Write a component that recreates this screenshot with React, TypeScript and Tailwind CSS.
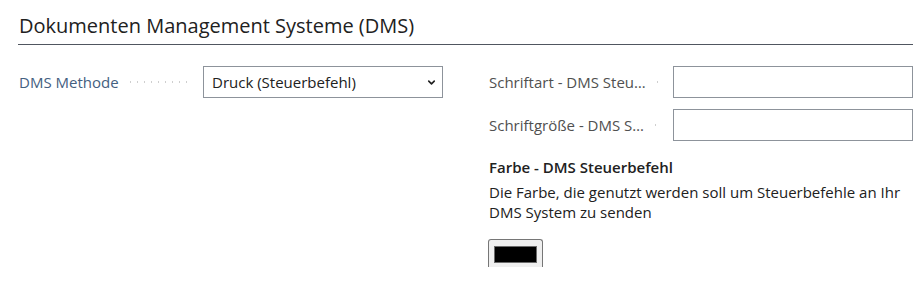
import { ChevronDown } from "lucide-react";

const font = "font-['Open_Sans','Noto_Sans',sans-serif]";

const Dots = () => (
  <div className="flex-1 min-w-[10px] h-[2px] bg-[radial-gradient(circle,#cfcfcf_0.9px,transparent_1.1px)] bg-[length:7px_2px] bg-repeat-x" />
);

const FieldRow = ({
  label,
  labelColor,
  children,
}: {
  label: string;
  labelColor: string;
  children: React.ReactNode;
}) => (
  <div className="flex items-center h-[32px]">
    <div className="w-[185px] flex items-center pr-[12px] pl-[1px] gap-[8px]">
      <span className={`whitespace-nowrap text-[15px] ${labelColor}`}>{label}</span>
      <Dots />
    </div>
    {children}
  </div>
);

const TextInput = () => (
  <input
    type="text"
    className="w-[240px] h-[32px] border border-[#8d939b] bg-white px-2 text-[15px] outline-none"
  />
);

export default function App() {
  return (
    <div className={`w-[923px] h-[298px] overflow-hidden bg-white text-[#212121] ${font}`}>
      <div className="pl-[18px] pr-[10px]">
        <div className="pt-[12px] pb-[5px] border-b border-[#505660]">
          <h1 className="text-[20px] leading-[27px] pl-[1px] text-[#212121]">
            Dokumenten Management Systeme (DMS)
          </h1>
        </div>

        <div className="grid grid-cols-[425px_425px] gap-x-[45px] mt-[21px]">
          {/* left column */}
          <div>
            <FieldRow label="DMS Methode" labelColor="text-[#44607f]">
              <div className="w-[240px] h-[32px] border border-[#8d939b] flex items-center justify-between pl-[8px] pr-[5px]">
                <span className="text-[15px] text-[#212121]">Druck (Steuerbefehl)</span>
                <ChevronDown className="w-[11px] h-[11px] text-[#212121]" strokeWidth={3.5} />
              </div>
            </FieldRow>
          </div>

          {/* right column */}
          <div className="flex flex-col">
            <div className="flex flex-col gap-[11px]">
              <FieldRow label="Schriftart - DMS Steu…" labelColor="text-[#505050]">
                <TextInput />
              </FieldRow>
              <FieldRow label="Schriftgröße - DMS S…" labelColor="text-[#505050]">
                <TextInput />
              </FieldRow>
            </div>

            <div className="mt-[16px] pl-[1px] text-[15px] leading-[20px] font-semibold text-[#212121]">
              Farbe - DMS Steuerbefehl
            </div>
            <p className="mt-[5px] pl-[1px] text-[15px] leading-[20px] text-[#212121] w-[415px]">
              Die Farbe, die genutzt werden soll um Steuerbefehle an Ihr DMS System zu senden
            </p>
            <div className="mt-[17px] w-[55px] h-[28px] border-t border-x border-[#767676] rounded-t-[3px] bg-[#efefef] pt-[6px] px-[5px]">
              <div className="h-[17px] bg-black border border-[#6b6b6b]" />
            </div>
          </div>
        </div>
      </div>
    </div>
  );
}
